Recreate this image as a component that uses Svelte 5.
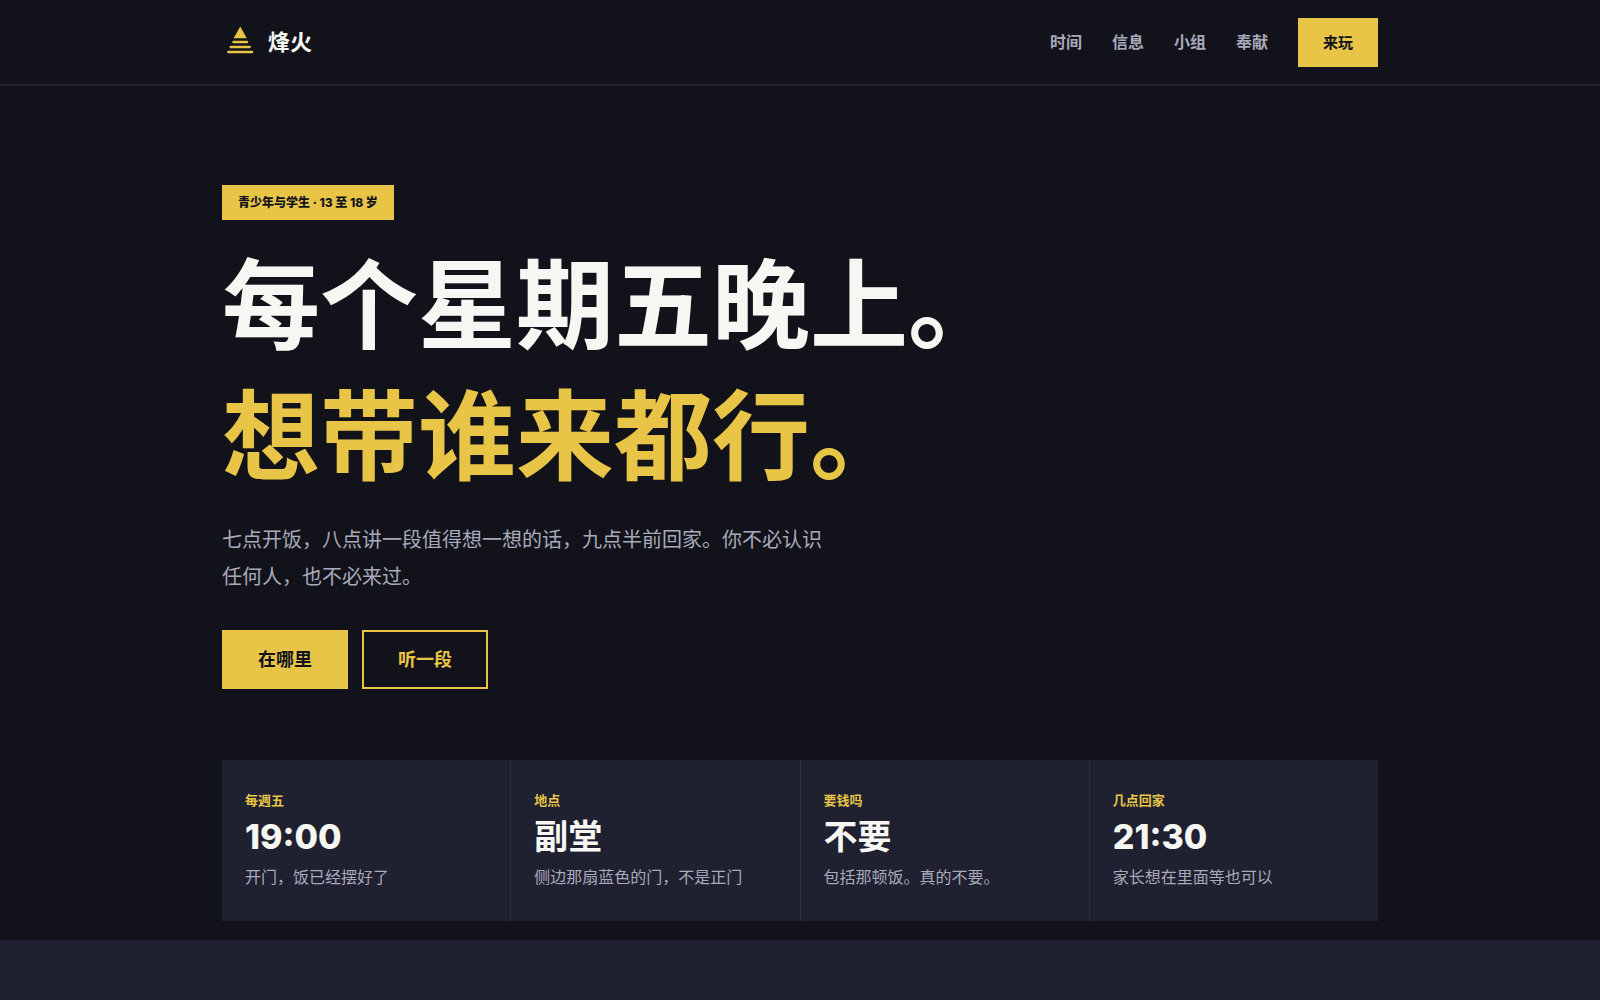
<script>
  const links = [
    { label: "时间", href: "#times" },
    { label: "信息", href: "#messages" },
    { label: "小组", href: "#groups" },
    { label: "奉献", href: "#give" },
  ];

  const facts = [
    { label: "每週五", value: "19:00", note: "开门，饭已经摆好了", clock: true },
    { label: "地点", value: "副堂", note: "侧边那扇蓝色的门，不是正门" },
    { label: "要钱吗", value: "不要", note: "包括那顿饭。真的不要。" },
    { label: "几点回家", value: "21:30", note: "家长想在里面等也可以", clock: true },
  ];
</script>

<div class="page" lang="zh-Hans">
  <header>
    <div class="wrap bar">
      <a class="brand" href="#top">
        <svg width="36" height="36" viewBox="0 0 36 36" aria-hidden="true">
          <path d="M18.2 2.5l6.6 11.7H11.600z" fill="currentColor" />
          <path
            d="M11.5 18h13.4M8.800 23h18.800M6.400 28h23.600"
            stroke="currentColor"
            stroke-width="2.600"
            stroke-linecap="round"
          />
        </svg>
        <span>烽火</span>
      </a>
      <nav>
        {#each links as link}
          <a href={link.href}>{link.label}</a>
        {/each}
        <a class="btn small" href="#visit">来玩</a>
      </nav>
    </div>
  </header>

  <main>
    <section class="wrap hero">
      <span class="tag">青少年与学生 · 13 至 18 岁</span>
      <h1>每个星期五晚上。<br /><em>想带谁来都行。</em></h1>
      <p class="lead">
        七点开饭，八点讲一段值得想一想的话，九点半前回家。你不必认识任何人，也不必来过。
      </p>
      <div class="actions">
        <a class="btn" href="#where">在哪里</a>
        <a class="btn ghost" href="#listen">听一段</a>
      </div>
      <div class="facts">
        {#each facts as fact}
          <div class="fact">
            <span class="label">{fact.label}</span>
            <strong class:clock={fact.clock}>{fact.value}</strong>
            <span class="note">{fact.note}</span>
          </div>
        {/each}
      </div>
    </section>
    <section class="next"></section>
  </main>
</div>

<style>
  :global(body) {
    background: #12131a;
  }
  .page {
    height: 100vh;
    overflow: hidden;
    color: #f6f6f2;
    font-family: Inter, "Noto Sans CJK SC", sans-serif;
    font-size: 16px;
    line-height: 25px;
  }
  a {
    color: inherit;
    text-decoration: none;
  }
  .wrap {
    max-width: 1156px;
    padding: 0 24px;
    margin: 0 auto;
  }
  header {
    border-bottom: 2px solid #24252d;
  }
  .bar {
    display: flex;
    align-items: center;
    justify-content: space-between;
    height: 84px;
  }
  .brand {
    display: flex;
    align-items: center;
    gap: 10px;
    font-size: 22px;
    font-weight: 700;
  }
  .brand svg {
    color: #e8c547;
  }
  nav {
    display: flex;
    align-items: center;
    gap: 30px;
    font-weight: 600;
    color: #a9a9bc;
  }
  .btn {
    padding: 14px 34px;
    background: #e8c547;
    color: #12131a;
    font-size: 18px;
    line-height: 27px;
    font-weight: 700;
    border: 2px solid #e8c547;
  }
  .small {
    padding: 9px 23px;
    font-size: 15px;
  }
  .ghost {
    background: none;
    color: #e8c547;
  }
  .hero {
    padding-top: 99px;
    padding-bottom: 19px;
  }
  .tag {
    display: inline-block;
    padding: 5px 16px;
    background: #e8c547;
    color: #12131a;
    font-size: 12px;
    font-weight: 800;
  }
  h1 {
    margin: 20px 0;
    font-size: 98px;
    font-weight: 700;
    line-height: 131px;
  }
  em {
    font-style: normal;
    color: #e8c547;
  }
  .lead {
    max-width: 600px;
    margin: 0 0 34px;
    color: #a9a9bc;
    font-size: 20px;
    line-height: 37px;
  }
  .actions {
    display: flex;
    gap: 14px;
    margin-bottom: 71px;
  }
  .facts {
    display: grid;
    grid-template-columns: repeat(4, 1fr);
    gap: 1px;
    background: #30313f;
  }
  .fact {
    display: flex;
    flex-direction: column;
    padding: 31px 23px;
    background: #1f2030;
  }
  .label {
    color: #e8c547;
    font-size: 13px;
    line-height: 18px;
    font-weight: 700;
  }
  strong {
    font-size: 34px;
    font-weight: 700;
    line-height: 56px;
  }
  .clock {
    font-weight: 800;
  }
  .note {
    color: #a9a9bc;
  }
  .next {
    height: 400px;
    background: #1f2030;
  }
</style>
